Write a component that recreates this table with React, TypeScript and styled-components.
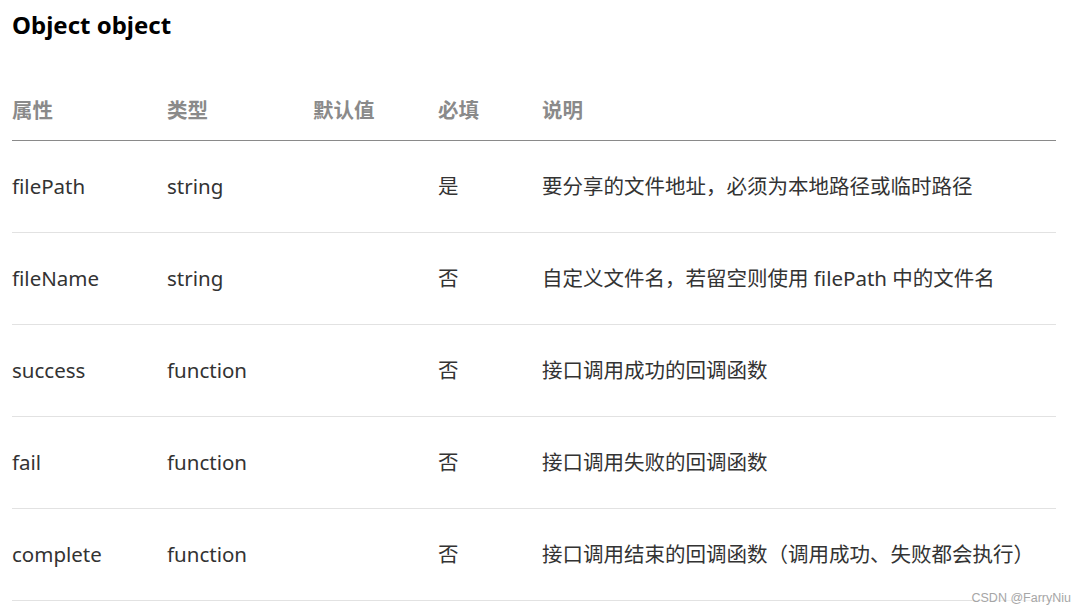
import React from "react";
import styled, { createGlobalStyle } from "styled-components";

const Global = createGlobalStyle`
  html, body { margin: 0; padding: 0; background: #fff; }
  body { font-family: "Noto Sans", "Noto Sans CJK SC", sans-serif; }
`;

const Page = styled.div`
  position: relative;
  width: 1086px;
  height: 614px;
  padding: 0 30px 0 12px;
  box-sizing: border-box;
  overflow: hidden;
`;

const Title = styled.h3`
  margin: 0;
  padding-top: 9px;
  font-size: 24px;
  line-height: 32px;
  font-weight: 700;
  color: #000;
`;

const Table = styled.table`
  width: 1044px;
  margin-top: 55px;
  border-collapse: collapse;
  table-layout: fixed;
  font-size: 20.5px;
  line-height: 28px;
`;

const Th = styled.th<{ $w?: number }>`
  width: ${(p) => (p.$w ? `${p.$w}px` : "auto")};
  text-align: left;
  padding: 0 0 16px 0;
  font-weight: 700;
  color: #8a8a8a;
  border-bottom: 1px solid #8a8a8a;
`;

const Td = styled.td`
  padding: 31px 0 32px 0;
  color: #333;
  border-bottom: 1px solid #e2e2e2;
  white-space: nowrap;
`;

const Watermark = styled.div`
  position: absolute;
  right: 15px;
  bottom: 9px;
  font-family: "Liberation Sans", Arial, sans-serif;
  font-size: 12.5px;
  color: #a6a6a6;
  background: rgba(255, 255, 255, 0.6);
`;

const rows = [
  ["filePath", "string", "", "是", "要分享的文件地址，必须为本地路径或临时路径"],
  ["fileName", "string", "", "否", "自定义文件名，若留空则使用 filePath 中的文件名"],
  ["success", "function", "", "否", "接口调用成功的回调函数"],
  ["fail", "function", "", "否", "接口调用失败的回调函数"],
  ["complete", "function", "", "否", "接口调用结束的回调函数（调用成功、失败都会执行）"],
];

export default function App() {
  return (
    <>
      <Global />
      <Page>
        <Title>Object object</Title>
        <Table>
          <thead>
            <tr>
              <Th $w={155}>属性</Th>
              <Th $w={146}>类型</Th>
              <Th $w={125}>默认值</Th>
              <Th $w={104}>必填</Th>
              <Th>说明</Th>
            </tr>
          </thead>
          <tbody>
            {rows.map((r) => (
              <tr key={r[0]}>
                {r.map((c, i) => (
                  <Td key={i}>{c}</Td>
                ))}
              </tr>
            ))}
          </tbody>
        </Table>
        <Watermark>CSDN @FarryNiu</Watermark>
      </Page>
    </>
  );
}
